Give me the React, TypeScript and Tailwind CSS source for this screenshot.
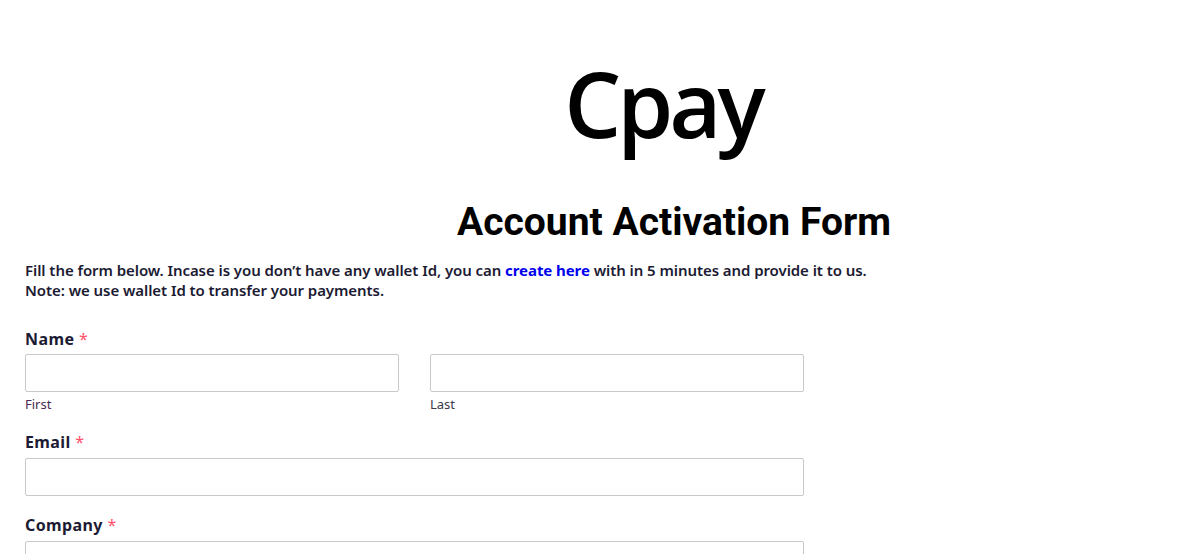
import React from "react";

const body = { fontFamily: '"Noto Sans", "Open Sans", Arial, sans-serif' };

function Label({ text }: { text: string }) {
  return (
    <div className="text-[16px] font-bold leading-[20px] tracking-[0.4px] text-[#1c1b33]" style={body}>
      {text} <span className="text-[#ff4f6b] font-normal">*</span>
    </div>
  );
}

export default function App() {
  return (
    <div className="w-[1180px] h-[554px] overflow-hidden bg-white">
      <div className="pl-[146px] text-center pt-[48px]">
        <div
          className="text-[90px] font-semibold tracking-[-4px] leading-[110px] text-black"
          style={{ fontFamily: '"Open Sans", "Noto Sans", sans-serif' }}
        >
          Cpay
        </div>
      </div>
      <div className="pl-[168px] text-center mt-[41px]">
        <h1
          className="text-[39px] font-bold leading-[46px] text-black"
          style={{ fontFamily: 'Roboto, "Noto Sans", sans-serif' }}
        >
          Account Activation Form
        </h1>
      </div>
      <div className="px-[25px]">
        <p className="mt-[15px] text-[15px] font-semibold leading-[20px] tracking-[-0.07px] text-[#1c1b33]" style={body}>
          Fill the form below. Incase is you don’t have any wallet Id, you can{" "}
          <a className="text-[#0000ee] font-bold">create here</a> with in 5 minutes and provide it to us.
          <br />
          Note: we use wallet Id to transfer your payments.
        </p>

        <div className="mt-[29px] w-[779px]">
          <Label text="Name" />
          <div className="mt-[5px] grid grid-cols-2 gap-[31px]">
            <div>
              <div className="h-[38px] border border-[#c9c9c9] rounded-[2px]" />
              <div className="mt-[3px] text-[13px] leading-[18px] text-[#4a2a4f]" style={body}>First</div>
            </div>
            <div>
              <div className="h-[38px] border border-[#c9c9c9] rounded-[2px]" />
              <div className="mt-[3px] text-[13px] leading-[18px] text-[#3a3a4a]" style={body}>Last</div>
            </div>
          </div>

          <div className="mt-[19px]">
            <Label text="Email" />
            <div className="mt-[6px] h-[38px] border border-[#c9c9c9] rounded-[2px]" />
          </div>

          <div className="mt-[19px]">
            <Label text="Company" />
            <div className="mt-[6px] h-[38px] border border-[#c9c9c9] rounded-[2px]" />
          </div>
        </div>
      </div>
    </div>
  );
}
